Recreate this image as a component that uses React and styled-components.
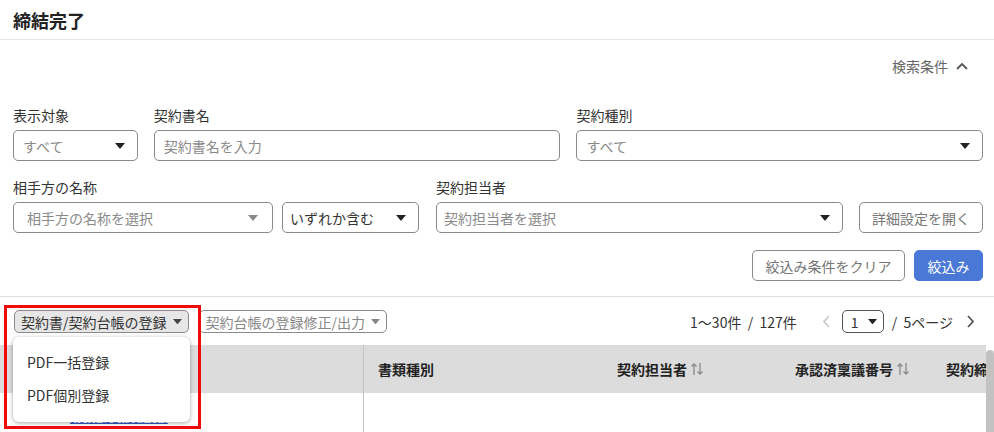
import React from 'react';
import styled, { createGlobalStyle } from 'styled-components';

const GlobalStyle = createGlobalStyle`
  body {
    margin: 0;
    background: #fff;
    font-family: "Noto Sans CJK JP", "Noto Sans", sans-serif;
    color: #333;
    overflow: hidden;
  }
`;

const Page = styled.div`
  width: 994px;
  height: 432px;
  position: relative;
  overflow: hidden;
`;

const Header = styled.header`
  height: 40px;
  display: flex;
  align-items: center;
  padding: 0 13px;
  border-bottom: 1px solid #e6e6e6;
  box-sizing: border-box;
`;

const Title = styled.h1`
  margin: 0;
  font-size: 18px;
  font-weight: 700;
  color: #222;
`;

const ToggleRow = styled.div`
  display: flex;
  justify-content: flex-end;
  padding: 16px 26px 0 0;
`;

const Toggle = styled.div`
  display: flex;
  align-items: center;
  gap: 8px;
  font-size: 14px;
  color: #666;
  line-height: 20px;
`;

const Form = styled.div`
  padding: 0 11px 0 13px;
`;

const Row = styled.div`
  display: flex;
  align-items: flex-end;
  gap: ${p => p.gap || 16}px;
  margin-top: ${p => p.top || 0}px;
`;

const Field = styled.div`
  display: flex;
  flex-direction: column;
  width: ${p => p.w}px;
`;

const Label = styled.label`
  font-size: 14px;
  line-height: 20px;
  margin-bottom: 5px;
  color: #333;
`;

const Box = styled.div`
  height: 31px;
  box-sizing: border-box;
  border: 1px solid #8a8a8a;
  border-radius: 5px;
  display: flex;
  align-items: center;
  justify-content: space-between;
  padding: 0 ${p => p.pr || 12}px 0 ${p => p.pl || 9}px;
  font-size: 14px;
  color: ${p => (p.muted ? '#8a8a8a' : '#333')};
  background: #fff;
`;

const Button = styled.button`
  height: 31px;
  width: ${p => p.w}px;
  box-sizing: border-box;
  border-radius: 5px;
  font-family: inherit;
  font-size: 14px;
  border: 1px solid ${p => (p.primary ? '#4a78d6' : '#8a8a8a')};
  background: ${p => (p.primary ? '#4a78d6' : '#fff')};
  color: ${p => (p.primary ? '#fff' : '#777')};
  padding: 0;
`;

const Actions = styled.div`
  display: flex;
  justify-content: flex-end;
  gap: 9px;
  margin-top: 17px;
`;

const Divider = styled.hr`
  margin: 15px 0 0;
  border: 0;
  border-top: 1px solid #dedede;
`;

const Toolbar = styled.div`
  display: flex;
  align-items: center;
  justify-content: space-between;
  padding: 13px 19px 0 14px;
  height: 23px;
`;

const ToolGroup = styled.div`
  display: flex;
  align-items: center;
  gap: ${p => p.gap || 0}px;
`;

const ToolButton = styled.div`
  height: 23px;
  box-sizing: border-box;
  display: flex;
  align-items: center;
  gap: 6px;
  padding: 0 6px;
  border: 1px solid #8a8a8a;
  border-radius: 5px;
  font-size: 14px;
  color: ${p => (p.active ? '#333' : '#888')};
  background: ${p => (p.active ? '#e6e6e6' : '#fff')};
`;

const PageText = styled.span`
  font-size: 14px;
  color: #333;
  white-space: pre;
`;

const Spacer = styled.span`
  width: ${p => p.w}px;
`;

const PageSelect = styled.div`
  width: 42px;
  height: 23px;
  box-sizing: border-box;
  border: 1px solid #555;
  border-radius: 5px;
  display: flex;
  align-items: center;
  justify-content: space-between;
  padding: 0 6px 0 8px;
  font-size: 14px;
`;

const Table = styled.div`
  margin-top: 12px;
  margin-right: 8px;
`;

const HeadRow = styled.div`
  display: grid;
  grid-template-columns: 363px 240px 178px 151px 1fr;
  height: 48px;
  background: #dcdcdc;
`;

const HeadCell = styled.div`
  display: flex;
  align-items: center;
  gap: 3px;
  padding-left: 14px;
  font-size: 14px;
  font-weight: 700;
  color: #222;
  white-space: nowrap;
  overflow: hidden;
  border-left: ${p => (p.divider ? '1px solid #c4c4c4' : 'none')};
`;

const BodyRow = styled.div`
  display: grid;
  grid-template-columns: 363px 1fr;
  height: 40px;
`;

const BodyCell = styled.div`
  display: flex;
  align-items: flex-end;
  padding-left: 70px;
  border-left: ${p => (p.divider ? '1px solid #c4c4c4' : 'none')};
`;

const RowLink = styled.a`
  color: #3557c9;
  font-size: 14px;
  text-decoration: underline;
  line-height: 34px;
`;

const Scrollbar = styled.div`
  position: absolute;
  right: 0;
  top: 350px;
  width: 8px;
  height: 90px;
  border-radius: 4px;
  background: #c2c2c2;
`;

const Menu = styled.div`
  position: absolute;
  left: 13px;
  top: 337px;
  width: 177px;
  height: 85px;
  box-sizing: border-box;
  background: #fff;
  border-radius: 6px;
  box-shadow: 0 1px 4px rgba(0, 0, 0, 0.35);
  padding: 9px 0 0 14px;
`;

const MenuItem = styled.div`
  font-size: 14px;
  color: #333;
  line-height: 33px;
`;

const Highlight = styled.div`
  position: absolute;
  left: 4px;
  top: 305px;
  width: 197px;
  height: 124px;
  box-sizing: border-box;
  border: 3px solid #f00a0a;
  pointer-events: none;
`;

const Caret = ({ color = '#222', size = 10 }) => (
  <svg width={size} height={size * 0.6} viewBox="0 0 10 6">
    <path d="M0 0 H10 L5 6 Z" fill={color} />
  </svg>
);

const ChevronUp = () => (
  <svg width="12" height="8" viewBox="0 0 12 8">
    <path d="M1 7 L6 2 L11 7" fill="none" stroke="#555" strokeWidth="1.8" />
  </svg>
);

const Chevron = ({ dir, color }) => (
  <svg width="8" height="13" viewBox="0 0 8 13">
    <path
      d={dir === 'left' ? 'M7 1 L2 6.5 L7 12' : 'M1 1 L6 6.5 L1 12'}
      fill="none"
      stroke={color}
      strokeWidth="1.8"
    />
  </svg>
);

const SortIcon = () => (
  <svg width="14" height="14" viewBox="0 0 14 14">
    <path d="M4 13 V2 M1.5 4.5 L4 2 L6.5 4.5" fill="none" stroke="#8a8a8a" strokeWidth="1.3" />
    <path d="M10 1 V12 M7.5 9.5 L10 12 L12.5 9.5" fill="none" stroke="#8a8a8a" strokeWidth="1.3" />
  </svg>
);

export default function App() {
  return (
    <Page>
      <GlobalStyle />
      <Header>
        <Title>締結完了</Title>
      </Header>

      <ToggleRow>
        <Toggle>
          検索条件 <ChevronUp />
        </Toggle>
      </ToggleRow>

      <Form>
        <Row top={29}>
          <Field w={125}>
            <Label>表示対象</Label>
            <Box muted>
              すべて <Caret />
            </Box>
          </Field>
          <Field w={407}>
            <Label>契約書名</Label>
            <Box muted>契約書名を入力</Box>
          </Field>
          <Field w={407}>
            <Label>契約種別</Label>
            <Box muted>
              すべて <Caret />
            </Box>
          </Field>
        </Row>

        <Row top={16} gap={9}>
          <Field w={260}>
            <Label>相手方の名称</Label>
            <Box muted pl={13} pr={14}>
              相手方の名称を選択 <Caret color="#888" />
            </Box>
          </Field>
          <Field w={137} style={{ marginRight: 8 }}>
            <Box pl={7}>
              いずれか含む <Caret />
            </Box>
          </Field>
          <Field w={407} style={{ marginRight: 7 }}>
            <Label>契約担当者</Label>
            <Box muted pl={7}>
              契約担当者を選択 <Caret />
            </Box>
          </Field>
          <Button w={124}>詳細設定を開く</Button>
        </Row>

        <Actions>
          <Button w={153}>絞込み条件をクリア</Button>
          <Button w={69} primary>
            絞込み
          </Button>
        </Actions>
      </Form>

      <Divider />

      <Toolbar>
        <ToolGroup gap={10}>
          <ToolButton active>
            契約書/契約台帳の登録 <Caret color="#444" size={9} />
          </ToolButton>
          <ToolButton>
            契約台帳の登録修正/出力 <Caret color="#888" size={9} />
          </ToolButton>
        </ToolGroup>
        <ToolGroup>
          <PageText>1〜30件  /  127件</PageText>
          <Spacer w={25} />
          <Chevron dir="left" color="#ccc" />
          <Spacer w={12} />
          <PageSelect>
            1 <Caret size={9} />
          </PageSelect>
          <Spacer w={8} />
          <PageText>/  5ページ</PageText>
          <Spacer w={14} />
          <Chevron dir="right" color="#555" />
        </ToolGroup>
      </Toolbar>

      <Table>
        <HeadRow>
          <HeadCell />
          <HeadCell divider>書類種別</HeadCell>
          <HeadCell>
            契約担当者 <SortIcon />
          </HeadCell>
          <HeadCell>
            承認済稟議番号 <SortIcon />
          </HeadCell>
          <HeadCell>契約締結日</HeadCell>
        </HeadRow>
        <BodyRow>
          <BodyCell>
            <RowLink>業務委託契約書</RowLink>
          </BodyCell>
          <BodyCell divider />
        </BodyRow>
      </Table>
      <Scrollbar />

      <Menu>
        <MenuItem>PDF一括登録</MenuItem>
        <MenuItem>PDF個別登録</MenuItem>
      </Menu>
      <Highlight />
    </Page>
  );
}
